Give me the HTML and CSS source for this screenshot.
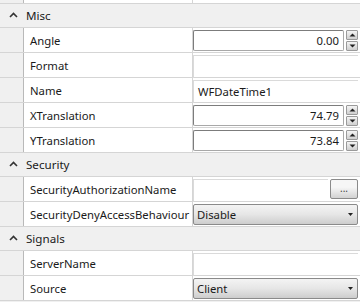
FILE: index.html
```html
<!DOCTYPE html>
<html lang="en">
<head>
    <meta charset="UTF-8">
    <title>Property Grid</title>
    <link rel="stylesheet" href="styles.css">
</head>
<body>
    <div class="grid">
        <div class="row stub">
            <div class="gutter"></div>
            <div class="name"></div>
            <div class="value"></div>
        </div>

        <div class="category">
            <svg class="chev" width="9" height="6" viewBox="0 0 9 6"><path d="M1 5 L4.5 1.5 L8 5" fill="none" stroke="#333" stroke-width="1.6"/></svg>
            <span>Misc</span>
        </div>
        <div class="row">
            <div class="gutter"></div>
            <div class="name">Angle</div>
            <div class="value">
                <div class="spin">
                    <div class="num">0.00</div>
                    <div class="arrows">
                        <div class="btn"><svg width="7" height="4" viewBox="0 0 7 4"><path d="M0.5 3.5 L3.5 0.5 L6.5 3.5Z" fill="#222"/></svg></div>
                        <div class="btn"><svg width="7" height="4" viewBox="0 0 7 4"><path d="M0.5 0.5 L3.5 3.5 L6.5 0.5Z" fill="#222"/></svg></div>
                    </div>
                </div>
            </div>
        </div>
        <div class="row">
            <div class="gutter"></div>
            <div class="name">Format</div>
            <div class="value"><div class="text"></div></div>
        </div>
        <div class="row">
            <div class="gutter"></div>
            <div class="name">Name</div>
            <div class="value"><div class="text">WFDateTime1</div></div>
        </div>
        <div class="row">
            <div class="gutter"></div>
            <div class="name">XTranslation</div>
            <div class="value">
                <div class="spin">
                    <div class="num">74.79</div>
                    <div class="arrows">
                        <div class="btn"><svg width="7" height="4" viewBox="0 0 7 4"><path d="M0.5 3.5 L3.5 0.5 L6.5 3.5Z" fill="#222"/></svg></div>
                        <div class="btn"><svg width="7" height="4" viewBox="0 0 7 4"><path d="M0.5 0.5 L3.5 3.5 L6.5 0.5Z" fill="#222"/></svg></div>
                    </div>
                </div>
            </div>
        </div>
        <div class="row">
            <div class="gutter"></div>
            <div class="name">YTranslation</div>
            <div class="value">
                <div class="spin">
                    <div class="num">73.84</div>
                    <div class="arrows">
                        <div class="btn"><svg width="7" height="4" viewBox="0 0 7 4"><path d="M0.5 3.5 L3.5 0.5 L6.5 3.5Z" fill="#222"/></svg></div>
                        <div class="btn"><svg width="7" height="4" viewBox="0 0 7 4"><path d="M0.5 0.5 L3.5 3.5 L6.5 0.5Z" fill="#222"/></svg></div>
                    </div>
                </div>
            </div>
        </div>

        <div class="category">
            <svg class="chev" width="9" height="6" viewBox="0 0 9 6"><path d="M1 5 L4.5 1.5 L8 5" fill="none" stroke="#333" stroke-width="1.6"/></svg>
            <span>Security</span>
        </div>
        <div class="row">
            <div class="gutter"></div>
            <div class="name">SecurityAuthorizationName</div>
            <div class="value">
                <div class="text short"></div>
                <div class="dots">...</div>
            </div>
        </div>
        <div class="row">
            <div class="gutter"></div>
            <div class="name">SecurityDenyAccessBehaviour</div>
            <div class="value">
                <div class="combo">
                    <span>Disable</span>
                    <svg width="5" height="3" viewBox="0 0 5 3"><path d="M0 0 L5 0 L2.5 3Z" fill="#222"/></svg>
                </div>
            </div>
        </div>

        <div class="category">
            <svg class="chev" width="9" height="6" viewBox="0 0 9 6"><path d="M1 5 L4.5 1.5 L8 5" fill="none" stroke="#333" stroke-width="1.6"/></svg>
            <span>Signals</span>
        </div>
        <div class="row">
            <div class="gutter"></div>
            <div class="name">ServerName</div>
            <div class="value"><div class="text"></div></div>
        </div>
        <div class="row">
            <div class="gutter"></div>
            <div class="name">Source</div>
            <div class="value">
                <div class="combo">
                    <span>Client</span>
                    <svg width="5" height="3" viewBox="0 0 5 3"><path d="M0 0 L5 0 L2.5 3Z" fill="#222"/></svg>
                </div>
            </div>
        </div>
    </div>
</body>
</html>
```

FILE: styles.css
```css
body {
    margin: 0;
    background-color: #f0f0f0;
    font-family: "Noto Sans", "Open Sans", sans-serif;
    font-size: 11.3px;
    color: #1a1a1a;
    overflow: hidden;
}
.grid {
    display: flex;
    flex-direction: column;
    width: 360px;
}
.row {
    display: flex;
    height: 24px;
    border-bottom: 1px solid #d5d5d5;
    background-color: #f0f0f0;
}
.row.stub {
    height: 3px;
}
.gutter {
    width: 23px;
    border-right: 1px solid #b9b9b9;
    background-color: #f0f0f0;
}
.name {
    width: 162px;
    padding-left: 6px;
    border-right: 1px solid #d5d5d5;
    background-color: #fff;
    display: flex;
    align-items: center;
    white-space: nowrap;
    overflow: hidden;
}
.value {
    flex: 1;
    background-color: #fff;
    display: flex;
    align-items: center;
    padding-right: 2px;
}
.category {
    display: flex;
    align-items: center;
    gap: 8px;
    height: 23px;
    padding-left: 9px;
    border-bottom: 1px solid #d5d5d5;
    background-color: #f0f0f0;
    font-size: 11.6px;
}
.chev {
    margin-top: -1px;
}
/* numeric spin box */
.spin {
    flex: 1;
    display: flex;
    height: 21px;
}
.num {
    flex: 1;
    text-align: right;
    padding-right: 4px;
    line-height: 19px;
    border: 1px solid #7c7c7c;
    border-right-color: #a8a8a8;
    border-bottom-color: #a8a8a8;
    border-radius: 2px;
}
.arrows {
    width: 12px;
    margin-left: 2px;
    display: flex;
    flex-direction: column;
    gap: 1px;
}
.btn {
    flex: 1;
    display: flex;
    align-items: center;
    justify-content: center;
    background: linear-gradient(#f4f4f4, #cfcfcf);
    border: 1px solid #9a9a9a;
    border-radius: 1px;
}
/* plain text box */
.text {
    flex: 1;
    height: 22px;
    line-height: 22px;
    padding-left: 4px;
    border-top: 1px solid #dadada;
    border-left: 1px solid #dadada;
    margin-top: 2px;
}
.text.short {
    margin-right: 2px;
}
.dots {
    width: 26px;
    height: 18px;
    border: 1px solid #8a8a8a;
    border-radius: 2px;
    background: linear-gradient(#f6f6f6 40%, #d2d2d2);
    text-align: center;
    line-height: 16px;
    font-size: 10px;
    color: #444;
}
/* dropdown */
.combo {
    flex: 1;
    height: 19px;
    display: flex;
    align-items: center;
    justify-content: space-between;
    padding: 0 4px 0 3px;
    border: 1px solid #8a8a8a;
    border-radius: 2px;
    background: linear-gradient(#f4f4f4, #e6e6e6 50%, #cdcdcd);
}
```
